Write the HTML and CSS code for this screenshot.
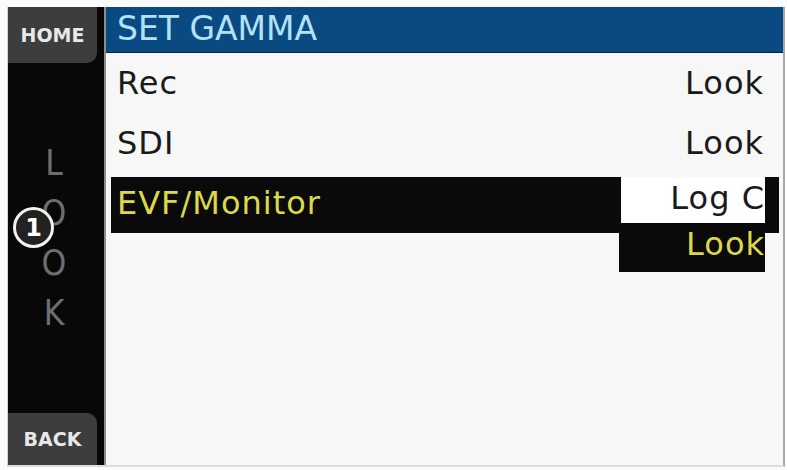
FILE: index.html
```html
<!DOCTYPE html>
<html>
<head>
  <title>Set Gamma</title>
  <link rel="stylesheet" href="styles.css">
</head>
<body>
  <div class="screen">
    <div class="side">
      <div class="side-button home">HOME</div>
      <div class="side-title">
        <span>L</span><span>O</span><span>O</span><span>K</span>
      </div>
      <div class="side-button back">BACK</div>
      <div class="callout">1</div>
    </div>
    <div class="main">
      <div class="header">SET GAMMA</div>
      <div class="row">
        <span>Rec</span>
        <span>Look</span>
      </div>
      <div class="row">
        <span>SDI</span>
        <span>Look</span>
      </div>
      <div class="row selected">
        <span>EVF/Monitor</span>
        <div class="dropdown">
          <div class="option current">Log C</div>
          <div class="option active">Look</div>
        </div>
      </div>
    </div>
  </div>
</body>
</html>
```

FILE: styles.css
```css
body {
  margin: 0;
  background-color: #fbfbfb;
  font-family: "DejaVu Sans", "Open Sans", sans-serif;
}
.screen {
  position: relative;
  display: flex;
  width: 775px;
  height: 458px;
  margin: 7px 0 0 7px;
  border-left: 1px solid #d4d4d4;
  border-right: 2px solid #a9a9a9;
  border-bottom: 2px solid #dcdcdc;
  background-color: #f7f7f7;
  overflow: hidden;
}
.side {
  display: flex;
  flex-direction: column;
  width: 96px;
  background-color: #080808;
  border-right: 2px solid #8c8c8c;
}
.side-button {
  width: 89px;
  background-color: #3c3d3c;
  color: #e8e8e8;
  font-weight: bold;
  font-size: 19px;
  display: flex;
  align-items: center;
  justify-content: center;
}
.home {
  height: 56px;
  border-bottom-right-radius: 10px;
}
.back {
  height: 52px;
  margin-top: auto;
  border-top-right-radius: 10px;
}
.side-title {
  display: flex;
  flex-direction: column;
  align-items: center;
  padding-top: 75px;
  padding-right: 4px;
  color: #6e6e6e;
  font-family: "DejaVu Sans Condensed", "DejaVu Sans", sans-serif;
  font-size: 35px;
  font-weight: 200;
  line-height: 50px;
}
.callout {
  position: absolute;
  left: 5px;
  top: 200px;
  width: 35px;
  height: 35px;
  border: 3px solid #f2f2f2;
  border-radius: 50%;
  background-color: #222;
  color: #fff;
  font-weight: bold;
  font-size: 24px;
  display: flex;
  align-items: center;
  justify-content: center;
}
.main {
  flex: 1;
  display: flex;
  flex-direction: column;
}
.header {
  height: 45px;
  background-color: #0a4a82;
  border-bottom: 1px solid #05223c;
  color: #b2e2f6;
  font-size: 33px;
  line-height: 44px;
  padding-left: 11px;
  margin-bottom: 2px;
}
.row {
  position: relative;
  display: flex;
  justify-content: space-between;
  align-items: center;
  height: 56px;
  margin: 2px 4px 2px 5px;
  padding: 0 15px 0 6px;
  color: #1a1a1a;
  font-size: 32px;
  letter-spacing: 1px;
}
.row span {
  margin-top: -4px;
}
.selected {
  background-color: #0a0a0a;
  color: #dcd84c;
}
.dropdown {
  position: absolute;
  right: 15px;
  top: 0;
  width: 145px;
}
.option {
  text-align: right;
  font-size: 32px;
  letter-spacing: 1px;
  margin-right: -1px;
}
.current {
  height: 46px;
  line-height: 42px;
  margin-left: 2px;
  background-color: #fff;
  color: #1a1a1a;
}
.active {
  height: 49px;
  line-height: 42px;
  background-color: #0a0a0a;
  color: #dcd84c;
}
```
